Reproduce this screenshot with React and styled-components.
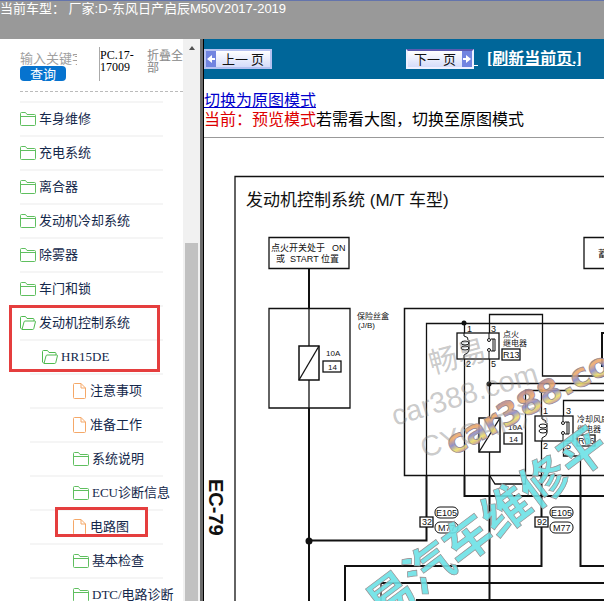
import React from 'react';
import styled, { createGlobalStyle } from 'styled-components';

const GlobalStyle = createGlobalStyle`
    body {
        margin: 0;
        background: #ffffff;
        font-family: "Liberation Serif", "Noto Sans CJK SC", serif;
    }
    *, *::before, *::after {
        box-sizing: border-box;
    }
`;

const Page = styled.div`
    display: flex;
    flex-direction: column;
    height: 100vh;
    overflow: hidden;
`;

const VehicleBar = styled.header`
    flex: none;
    height: 39px;
    border-top: 1px solid #6474ac;
    background: #999999;
    color: #ffffff;
    font: 13px/16px "Liberation Sans", "Noto Sans CJK SC", sans-serif;
    white-space: pre;
`;

const Frames = styled.div`
    display: flex;
    flex: 1;
    min-height: 0;
`;

const Sidebar = styled.aside`
    display: flex;
    flex: none;
    width: 204px;
    border-right: 1px solid #000000;
    box-shadow: inset -3px 0 0 #6b6b6b;
    background: #ffffff;
    padding-right: 3px;
`;

const SidebarContent = styled.div`
    flex: 1;
    min-width: 0;
    overflow: hidden;
    padding-left: 20px;
`;

const SearchForm = styled.form`
    display: grid;
    grid-template-columns: 79px 48px 36px;
    height: 53px;
    padding-top: 8px;
    border-bottom: 1px dashed #bbbbbb;
    line-height: 12px;
    font-size: 12px;
`;

const SearchInput = styled.input`
    display: block;
    width: 57px;
    height: 19px;
    padding: 4px 0 0;
    border: 0;
    outline: 0;
    font: 13px/15px "Liberation Sans", "Noto Sans CJK SC", sans-serif;
    &::placeholder {
        color: #a0a0a0;
        opacity: 1;
    }
`;

const SearchButton = styled.button`
    display: block;
    width: 46px;
    height: 15px;
    padding: 0;
    border: 0;
    border-radius: 4px;
    background: #0673cf;
    color: #ffffff;
    font: 13px/15px "Noto Sans CJK SC", sans-serif;
`;

const PageCode = styled.div`
    height: 34px;
    border-left: 1px solid #aaaaaa;
    padding-top: 2px;
`;

const CollapseButton = styled.button`
    align-self: start;
    padding: 2px 0 0;
    border: 0;
    background: none;
    color: #888888;
    font: 12px/12px "Noto Sans CJK SC", sans-serif;
    text-align: left;
`;

const Tree = styled.ul`
    margin: 9px 0 0;
    padding: 0;
    list-style: none;
`;

const TreeRow = styled.li`
    position: relative;
    height: 34px;
    width: ${props => (props.$level > 1 ? '133px' : '143px')};
    margin-left: ${props => (props.$level > 1 ? '10px' : '0')};
    padding-left: ${props => [0, 22, 43][props.$level]}px;
    border-top: 2px solid #f5f5f5;
`;

const TreeLink = styled.a`
    display: flex;
    align-items: center;
    gap: 3px;
    height: 32px;
    color: #14284b;
    font-size: 13px;
    line-height: 16px;
    text-decoration: none;
    white-space: nowrap;
    svg {
        flex: none;
    }
`;

const Marker = styled.div`
    position: absolute;
    z-index: 1;
    top: ${props => props.$top}px;
    left: ${props => props.$left}px;
    width: ${props => props.$width}px;
    height: ${props => props.$height}px;
    border: 3px solid #e53e3e;
    pointer-events: none;
`;

const Scrollbar = styled.div`
    display: flex;
    flex-direction: column;
    align-items: center;
    flex: none;
    width: 17px;
    background: #f1f1f1;
`;

const ScrollArrow = styled.div`
    margin-top: 7px;
    border: 3px solid transparent;
    border-top: 0;
    border-bottom: 4px solid #505050;
`;

const ScrollThumb = styled.div`
    flex: 1;
    width: 13px;
    margin-top: 193px;
    background: #c1c1c1;
`;

const Main = styled.main`
    display: flex;
    flex-direction: column;
    flex: 1;
    min-width: 0;
    overflow: hidden;
`;

const Toolbar = styled.nav`
    display: flex;
    align-items: center;
    flex: none;
    height: 40px;
    background: #006699;
`;

const PagerButton = styled.button`
    display: flex;
    flex-direction: ${props => (props.$next ? 'row-reverse' : 'row')};
    width: 68px;
    height: 20px;
    margin-left: ${props => (props.$next ? '134px' : '0')};
    padding: 0;
    border: 2px solid ${props => (props.$next ? '#eef0ff' : '#b5c1f0')};
    border-top-color: ${props => (props.$next ? '#5a5ab0' : '#b5c1f0')};
    background: linear-gradient(#ffffff, #d5dcfa);
    color: #111111;
    font: 13px/16px "Noto Sans CJK SC", sans-serif;
    svg {
        flex: none;
    }
    span {
        flex: 1;
        text-align: center;
        white-space: pre;
    }
`;

const LinkGap = styled.span`
    color: #ffffff;
    font-size: 16px;
    line-height: 20px;
    text-decoration: underline;
    white-space: pre;
`;

const RefreshLink = styled.a`
    margin-left: 9px;
    color: #ffffff;
    font: bold 16px/20px "Liberation Serif", "Noto Sans CJK SC", serif;
    white-space: nowrap;
`;

const ModeInfo = styled.section`
    flex: none;
    height: 59px;
    padding-top: 12px;
    border-bottom: 1px solid #999999;
    font-size: 16px;
    line-height: 19px;
    white-space: nowrap;
    a {
        display: table;
        color: #0000cc;
    }
    strong {
        color: #dd0000;
        font-weight: normal;
    }
`;

const Drawing = styled.svg`
    display: block;
    flex: none;
    width: 400px;
    height: 463px;
    font-family: "Liberation Sans", "Noto Sans CJK SC", sans-serif;
`;

const FolderIcon = () => (
    <svg width="16" height="14" viewBox="0 0 16 14" fill="none" stroke="#5fbf5f">
        <path d="M.5 12.500V1.500q0-1 1-1h4l1.500 2h7.500q1 0 1 1v9q0 1-1 1h-13q-1 0-1-1zM.5 4.500h15" />
    </svg>
);

const OpenFolderIcon = () => (
    <svg width="16" height="14" viewBox="0 0 16 14" fill="none" stroke="#4fba4f">
        <path d="M2 13.500L.5 12V1.500q0-1 1-1h4L7 2.500h6q1 0 1 1V5M2 13.500L4 6q.3-1 1-1h9.800q.8 0 .6 1l-1.600 6.500q-.3 1-1 1z" />
    </svg>
);

const FileIcon = () => (
    <svg width="14" height="16" viewBox="0 0 14 16" fill="none" stroke="#f5a868">
        <path d="M.5 14.500v-13q0-1 1-1H8L12.500 5v9.500q0 1-1 1h-10q-1 0-1-1zM8 .5V5h4.500" />
    </svg>
);

const icons = { folder: FolderIcon, open: OpenFolderIcon, file: FileIcon };

const rows = [
    { label: '车身维修', icon: 'folder', level: 0 },
    { label: '充电系统', icon: 'folder', level: 0 },
    { label: '离合器', icon: 'folder', level: 0 },
    { label: '发动机冷却系统', icon: 'folder', level: 0 },
    { label: '除雾器', icon: 'folder', level: 0 },
    { label: '车门和锁', icon: 'folder', level: 0 },
    { label: '发动机控制系统', icon: 'open', level: 0, marker: { $top: -2, $left: -11, $width: 151, $height: 67 } },
    { label: 'HR15DE', icon: 'open', level: 1 },
    { label: '注意事项', icon: 'file', level: 2 },
    { label: '准备工作', icon: 'file', level: 2 },
    { label: '系统说明', icon: 'folder', level: 2 },
    { label: 'ECU诊断信息', icon: 'folder', level: 2 },
    { label: '电路图', icon: 'file', level: 2, marker: { $top: -4, $left: 25, $width: 93, $height: 30 } },
    { label: '基本检查', icon: 'folder', level: 2 },
    { label: 'DTC/电路诊断', icon: 'folder', level: 2 },
];

const Arrow = ({ next }) => (
    <svg width="10" height="16" viewBox="0 0 10 16">
        <path d="M0 0h10v16H0z" fill="#7184e0" />
        <path d={next ? 'M1 7h3V4l5 4-5 4V9H1z' : 'M9 7H6V4L1 8l5 4V9h3z'} fill="#fff" />
    </svg>
);

const Fuse = ({ x, y, w, h }) => (
    <g>
        <rect x={x} y={y} width={w} height={h} fill="#fff" strokeWidth="1.500" />
        <path d={`M${x} ${y + h}L${x + w} ${y}`} />
    </g>
);

// coil on the left, contact on the right
const Relay = ({ x, y, w, h }) => (
    <g strokeWidth="1">
        <rect x={x} y={y} width={w} height={h} fill="#fff" strokeWidth="1.300" />
        <path d={`M${x + 7} ${y}v3q5 1 4 4`} />
        <ellipse cx={x + 8} cy={y + 10} rx="4" ry="2" />
        <ellipse cx={x + 8} cy={y + 15} rx="4" ry="2" />
        <path d={`M${x + 12} ${y + 7}v10q0 3-5 5V${y + h}`} />
        <path d={`M${x + w - 10} ${y}v5M${x + w - 10} ${y + h}v-7M${x + w - 8} ${y + 6}h4v12h-4M${x + w - 6} ${y + 6}v12`} />
        <circle cx={x + w - 10} cy={y + 7} r="1.500" fill="#fff" />
        <circle cx={x + w - 10} cy={y + 17} r="1.500" fill="#fff" />
    </g>
);

const Connector = ({ x, number }) => (
    <g strokeWidth="1.300">
        <rect x={x - 6} y="517" width="13" height="10" fill="#fff" />
        <rect x={x + 9} y="507" width="23" height="11" rx="5" fill="#fff" strokeWidth="1" />
        <rect x={x + 9} y="522" width="23" height="11" rx="5" fill="#fff" strokeWidth="1" />
        <g fill="#111" stroke="none" fontSize="9">
            <text x={x - 4} y="525">{number}</text>
            <text x={x + 10} y="516">E105</text>
            <text x={x + 12} y="531">M77</text>
        </g>
    </g>
);

const WiringDiagram = () => (
    <Drawing viewBox="204 138 400 463" role="img" aria-label="电路图">
        <defs>
            <linearGradient id="rainbow" x1="0" y1="0" x2="0" y2="1">
                <stop offset=".2" stopColor="#b98a8c" />
                <stop offset=".4" stopColor="#f0ac6a" />
                <stop offset=".55" stopColor="#8b8ac8" />
                <stop offset=".7" stopColor="#efe06a" />
                <stop offset=".85" stopColor="#b07ab0" />
            </linearGradient>
        </defs>
        <g fill="none" stroke="#111" strokeWidth="1.300">
            <path d="M235 601V176.500H604" />
            <path d="M269 237.500h80v31h-80zM604 237.500h-20v31h20" />
            <path d="M309 268.500V309M309 408V601" strokeWidth="2" />
            <path d="M269 308.500h81v99.500h-81zM309 309v99" />
            <path d="M604 308.500H404.500V475.500H604" strokeWidth="1.500" />
            <path d="M604 323.500H426.500V475M464.500 323.500V475M489.500 334V314.500H542.500V376H604M489.500 355V475M489.500 383.500H604M604 390.500H525.500V484H495l-5-8M541.500 390V475M604 400.500H563.500V416M563.500 440V456H580.500V475M381 601V583" />
            <path d="M426.500 475V540.500H309M464.500 475V496H604M489.500 475V601M541.500 475V566H345V601M580.500 475V566H604M381 583H604M416 600H604" strokeWidth="2" />
            <Relay x={457} y={333} w={42} h={26} />
            <Relay x={535} y={416} w={38} h={25} />
            <Fuse x={299} y={346} w={20} h={34} />
            <Fuse x={479} y={418} w={21} h={34} />
            <rect x="323" y="361" width="18" height="11" />
            <rect x="504" y="433" width="18" height="11" />
            <rect x="502" y="349" width="18" height="11" />
            <rect x="577" y="435" width="18" height="11" />
            <rect x="602" y="333" width="20" height="33" strokeWidth="2" />
            <Connector x={426} number="32" />
            <Connector x={541} number="92" />
        </g>
        <g fill="#111">
            <circle cx="309" cy="541" r="3.500" />
            <circle cx="464" cy="323" r="2.500" />
            <circle cx="489" cy="384" r="2.500" />
            <circle cx="541" cy="391" r="2" />
            <text x="246" y="206" fontSize="17">发动机控制系统 (M/T 车型)</text>
            <g fontSize="9">
                <text x="271" y="251">点火开关处于</text>
                <text x="332" y="251">ON</text>
                <text x="276" y="262">或</text>
                <text x="290" y="262">START 位置</text>
                <text x="598" y="257">蓄电池</text>
                <text x="503" y="337" fontSize="8">点火</text>
                <text x="503" y="346" fontSize="8">继电器</text>
                <text x="357" y="319" fontSize="8">保险丝盒</text>
                <text x="358" y="328" fontSize="8">(J/B)</text>
                <text x="326" y="356" fontSize="8">10A</text>
                <text x="328" y="370" fontSize="8">14</text>
                <text x="508" y="430" fontSize="8">10A</text>
                <text x="509" y="442" fontSize="8">14</text>
                <text x="503" y="358">R13</text>
                <text x="578" y="444">R06</text>
                <text x="577" y="422" fontSize="8">冷却风扇</text>
                <text x="577" y="432" fontSize="8">继电器</text>
                <text x="467" y="332">1</text>
                <text x="491" y="332">3</text>
                <text x="466" y="367">2</text>
                <text x="491" y="367">5</text>
                <text x="543" y="414">1</text>
                <text x="566" y="414">3</text>
                <text x="543" y="449">2</text>
                <text x="566" y="449">5</text>
            </g>
            <text transform="translate(209 479) rotate(90)" fontSize="20" fontWeight="bold">EC-79</text>
        </g>
        <g fill="#777" fillOpacity=".4">
            <text transform="translate(432 374) rotate(-15)" fontSize="29">畅易</text>
            <text transform="translate(395 426) rotate(-17)" fontSize="29">car388.com</text>
            <text transform="translate(424 458) rotate(-17)" fontSize="29">CYCAR汽</text>
        </g>
        <text
            transform="translate(453 456) rotate(-28)"
            fontFamily="DejaVu Sans, sans-serif"
            fontSize="33"
            fontWeight="bold"
            fill="url(#rainbow)"
            stroke="#8f8290"
            strokeWidth=".7"
            fillOpacity=".9"
        >
            car388.co
        </text>
        <text
            transform="translate(382 625) rotate(-37)"
            fontSize="48"
            fontWeight="bold"
            fill="#6ce1e6"
            stroke="#998f91"
            strokeWidth=".7"
            fillOpacity=".9"
        >
            易汽车维修平
        </text>
    </Drawing>
);

const App = () => (
    <Page>
        <GlobalStyle />
        <VehicleBar>当前车型： 厂家:D-东风日产启辰M50V2017-2019</VehicleBar>
        <Frames>
            <Sidebar>
                <SidebarContent>
                    <SearchForm onSubmit={e => e.preventDefault()}>
                        <div>
                            <SearchInput aria-label="输入关键字" placeholder="输入关键字" />
                            <SearchButton type="submit">查询</SearchButton>
                        </div>
                        <PageCode>PC.17-<br />17009</PageCode>
                        <CollapseButton type="button">折叠全部</CollapseButton>
                    </SearchForm>
                    <Tree>
                        {rows.map(row => {
                            const Icon = icons[row.icon];
                            return (
                                <TreeRow key={row.label} $level={row.level}>
                                    <TreeLink href="#"><Icon />{row.label}</TreeLink>
                                    {row.marker && <Marker {...row.marker} />}
                                </TreeRow>
                            );
                        })}
                    </Tree>
                </SidebarContent>
                <Scrollbar>
                    <ScrollArrow />
                    <ScrollThumb />
                </Scrollbar>
            </Sidebar>
            <Main>
                <Toolbar>
                    <PagerButton type="button"><Arrow /><span>上一 页</span></PagerButton>
                    <PagerButton type="button" $next><Arrow next /><span>下一 页</span></PagerButton>
                    <LinkGap> </LinkGap>
                    <RefreshLink href="#">[刷新当前页.]</RefreshLink>
                </Toolbar>
                <ModeInfo>
                    <a href="#">切换为原图模式</a>
                    <strong>当前：预览模式</strong>若需看大图，切换至原图模式
                </ModeInfo>
                <WiringDiagram />
            </Main>
        </Frames>
    </Page>
);

export default App;
